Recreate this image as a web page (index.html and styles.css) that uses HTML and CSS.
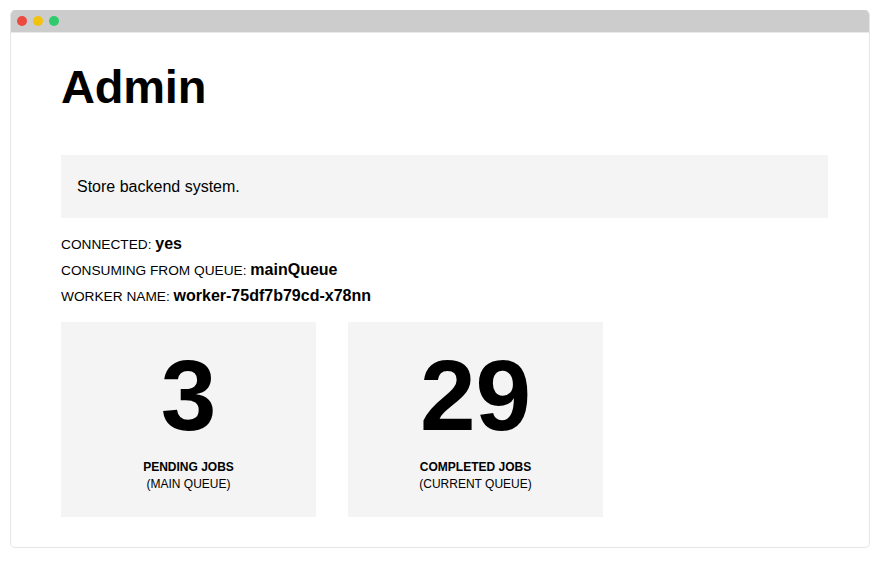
FILE: index.html
```html
<!DOCTYPE html>
<html>
<head>
<meta charset="utf-8">
<link rel="stylesheet" href="styles.css">
</head>
<body>
<div class="window">
  <div class="titlebar">
    <span class="dot red"></span>
    <span class="dot yellow"></span>
    <span class="dot green"></span>
  </div>
  <div class="content">
    <h1 class="title">Admin</h1>
    <div class="description">Store backend system.</div>
    <div class="info">
      <div class="row">CONNECTED: <b>yes</b></div>
      <div class="row">CONSUMING FROM QUEUE: <b>mainQueue</b></div>
      <div class="row">WORKER NAME: <b>worker-75df7b79cd-x78nn</b></div>
    </div>
    <div class="cards">
      <div class="card">
        <div class="num">3</div>
        <div class="label"><b>PENDING JOBS</b><br>(MAIN QUEUE)</div>
      </div>
      <div class="card">
        <div class="num">29</div>
        <div class="label"><b>COMPLETED JOBS</b><br>(CURRENT QUEUE)</div>
      </div>
    </div>
  </div>
</div>
</body>
</html>
```

FILE: styles.css
```css
html, body {
  margin: 0;
  padding: 0;
  background: #ffffff;
}
body {
  padding: 10px 12px 15px 10px;
  font-family: "Liberation Sans", Arial, sans-serif;
  color: #000;
}
.window {
  width: 858px;
  height: 537px;
  border: 1px solid #e6e6e6;
  border-top: none;
  border-radius: 5px;
  overflow: hidden;
  background: #fff;
}
.titlebar {
  height: 23px;
  background: #cccccc;
  display: flex;
  align-items: center;
  gap: 6px;
  padding-left: 6px;
  border-bottom: 1px solid #e8e8e8;
  box-sizing: border-box;
}
.dot {
  width: 10px;
  height: 10px;
  border-radius: 50%;
  display: block;
}
.red { background: #ec4a3f; }
.yellow { background: #f3c20d; }
.green { background: #2ecb6c; }
.content {
  padding: 31px 41px 0 50px;
}
.title {
  margin: 0;
  font-size: 47px;
  line-height: 46px;
  font-weight: bold;
  letter-spacing: -0.2px;
}
.description {
  margin-top: 45px;
  background: #f4f4f4;
  height: 63px;
  box-sizing: border-box;
  padding: 20px 16px;
  font-size: 16px;
  line-height: 23px;
}
.info {
  margin-top: 12px;
}
.row {
  height: 26px;
  line-height: 27px;
  font-size: 13.7px;
}
.row b {
  font-size: 16px;
}
.cards {
  margin-top: 14px;
  display: flex;
  gap: 32px;
}
.card {
  width: 255px;
  height: 195px;
  box-sizing: border-box;
  background: #f4f4f4;
  padding-top: 24px;
  text-align: center;
}
.num {
  font-size: 100px;
  line-height: 99px;
  font-weight: bold;
}
.label {
  margin-top: 14px;
  font-size: 12px;
  line-height: 17px;
}
```
